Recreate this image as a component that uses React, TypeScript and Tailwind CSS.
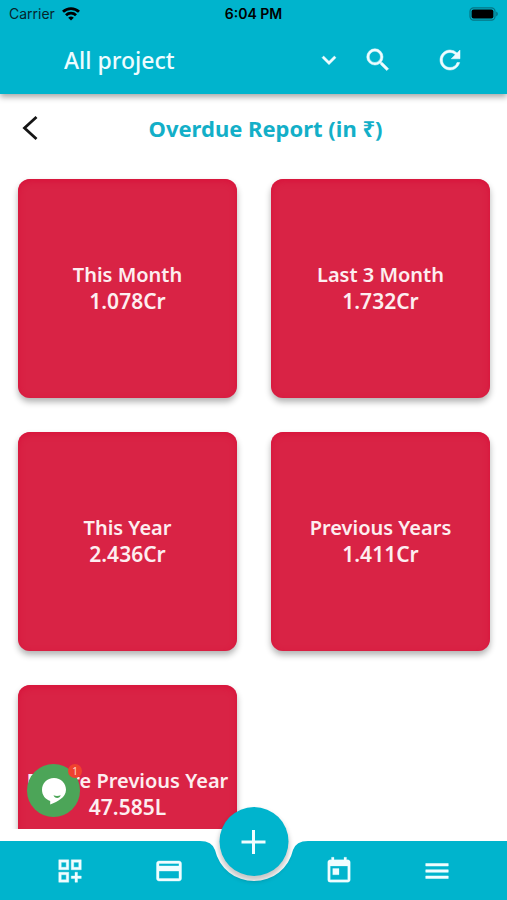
import {
  MdKeyboardArrowDown,
  MdMenu,
  MdOutlineCreditCard,
  MdOutlineDashboardCustomize,
  MdRefresh,
  MdSearch,
  MdToday,
} from "react-icons/md";

const reports = [
  { label: "This Month", amount: "1.078Cr" },
  { label: "Last 3 Month", amount: "1.732Cr" },
  { label: "This Year", amount: "2.436Cr" },
  { label: "Previous Years", amount: "1.411Cr" },
  { label: "Before Previous Year", amount: "47.585L" },
];

function StatusBar() {
  return (
    <div className="grid h-7 grid-cols-3 items-center px-[9px] font-['Inter',sans-serif] text-sm text-[#06252c]">
      <div className="flex items-center gap-[7px]">
        <span>Carrier</span>
        <svg viewBox="0 0 18 14" className="h-3.5 w-[18px]" fill="none" stroke="#000" strokeWidth="2.8" aria-hidden="true">
          <path d="M1 4.800a11.500 11.500 0 0 1 16 0" />
          <path d="M4 8.200a7.200 7.200 0 0 1 10 0" />
          <path d="M9 13.600 6.200 10.800a4 4 0 0 1 5.600 0z" fill="#000" stroke="none" />
        </svg>
      </div>
      <span className="text-center font-semibold text-black">6:04 PM</span>
      <svg viewBox="0 0 30 14" className="h-3.5 w-[30px] justify-self-end" aria-hidden="true">
        <rect x="2" y="0.8" width="25" height="12.4" rx="3.6" fill="none" stroke="#067484" strokeWidth="1.2" />
        <rect x="3.6" y="2.4" width="21.8" height="9.2" rx="2" fill="#000" />
        <path d="M28.200 4.600v4.800q1.700-.9 1.700-2.400t-1.700-2.400z" fill="#067484" />
      </svg>
    </div>
  );
}

function Header() {
  return (
    <header className="z-10 shrink-0 bg-[#00b4cd] shadow-[0_3px_6px_rgba(0,0,0,0.35)]">
      <StatusBar />
      <div className="flex h-16 items-center pr-[42px] pl-16 text-[#eefcff] [&_path[fill=none]]:hidden">
        <div className="grid flex-1 items-center">
          <select
            aria-label="Project"
            className="col-start-1 row-start-1 h-10 w-full appearance-none bg-transparent pr-8 text-[23px] leading-10 font-medium outline-none"
          >
            <option>All project</option>
          </select>
          <MdKeyboardArrowDown size={28} strokeWidth={0.4} className="pointer-events-none col-start-1 row-start-1 justify-self-end" />
        </div>
        <button type="button" aria-label="Search" className="ml-5">
          <MdSearch size={30} strokeWidth={0.4} />
        </button>
        <button type="button" aria-label="Refresh" className="ml-[42px]">
          <MdRefresh size={30} strokeWidth={0.4} />
        </button>
      </div>
      <div className="h-0.5" />
    </header>
  );
}

function ReportCard({ label, amount }: { label: string; amount: string }) {
  return (
    <button
      type="button"
      className="flex aspect-square flex-col items-center justify-center rounded-xl bg-[#d92345] pb-0.5 font-semibold whitespace-nowrap text-[#fdeef0] shadow-[0_4px_6px_rgba(0,0,0,0.3),inset_0_2px_6px_#d8123a]"
    >
      <span className="text-xl leading-[27px]">{label}</span>
      <span className="text-[21px] leading-[27px]">{amount}</span>
    </button>
  );
}

function ChatBubble() {
  return (
    <button
      type="button"
      aria-label="Open chat"
      className="absolute bottom-[83px] left-[27px] z-10 flex size-[53px] items-center justify-center rounded-full bg-[#4ca558]"
    >
      <svg viewBox="0 0 28 28" className="size-7" aria-hidden="true">
        <path d="M14 1C7 1 2 6.300 2 12.800c0 5.600 3.500 9.700 8.200 11.200v3.400c4-1.500 8-3.400 10.400-5.400 3.300-2.200 5.400-5.300 5.400-9.200C26 6.300 21 1 14 1z" fill="#fff" />
        <path d="M13.500 18.300c2.200.9 5 .8 7.200 0-.6 1.700-1.800 2.600-3.500 2.600s-3-.9-3.700-2.600z" fill="#4ca558" />
      </svg>
      <span className="absolute top-0 -right-0.5 flex size-3.5 items-center justify-center rounded-full bg-[#f0412f] text-[10px] leading-none text-[#ffd9d2]">
        1
      </span>
    </button>
  );
}

function BottomNav() {
  return (
    <nav className="relative flex h-[59px] shrink-0 text-[#f0fdff] [&_path[fill=none]]:hidden">
      <div className="flex flex-1 items-center justify-between bg-[#00b4cd] pr-2.5 pl-[55px]">
        <button type="button" aria-label="Dashboard"><MdOutlineDashboardCustomize size={30} strokeWidth={0.3} /></button>
        <button type="button" aria-label="Payments"><MdOutlineCreditCard size={30} strokeWidth={0.3} /></button>
      </div>
      <svg viewBox="0 0 120 59" className="h-[59px] w-[120px]" aria-hidden="true">
        <path d="M0 0H6Q18 0 21 9A40 40 0 0 0 99 9Q102 0 114 0H120V59H0Z" fill="#00b4cd" />
      </svg>
      <div className="flex flex-1 items-center justify-between bg-[#00b4cd] pr-[55px] pl-2.5">
        <button type="button" aria-label="Calendar"><MdToday size={30} strokeWidth={0.2} /></button>
        <button type="button" aria-label="Menu"><MdMenu size={30} strokeWidth={0.4} strokeLinejoin="round" /></button>
      </div>
      <button
        type="button"
        aria-label="Add"
        className="absolute -top-[34px] left-1/2 flex size-[69px] -translate-x-1/2 items-center justify-center rounded-full bg-[#00b4cd] shadow-[0_4px_5px_1px_rgba(0,0,0,0.22)]"
      >
        <svg viewBox="0 0 26 26" className="size-[26px]" stroke="currentColor" strokeWidth="3" aria-hidden="true">
          <path d="M13 1v24M1 13h24" />
        </svg>
      </button>
    </nav>
  );
}

export default function App() {
  return (
    <div className="relative flex h-screen flex-col bg-white font-['Noto_Sans',sans-serif]">
      <Header />
      <main className="mb-3 min-h-0 flex-1 overflow-hidden">
        <div className="flex h-[68px] items-center px-[18px]">
          <button type="button" aria-label="Back" className="flex w-6 justify-center">
            <svg viewBox="0 0 16 26" className="h-[26px] w-4" fill="none" stroke="#151515" strokeWidth="2.8" aria-hidden="true">
              <path d="M14.500 2 2.500 13l12 11" />
            </svg>
          </button>
          <h1 className="flex-1 text-center text-[22px] leading-8 font-bold text-[#13afc8]">Overdue Report (in ₹)</h1>
        </div>
        <div className="grid grid-cols-2 gap-[34px] pt-[17px] pr-[17px] pl-[18px]">
          {reports.map((report) => (
            <ReportCard key={report.label} {...report} />
          ))}
        </div>
      </main>
      <ChatBubble />
      <BottomNav />
    </div>
  );
}
